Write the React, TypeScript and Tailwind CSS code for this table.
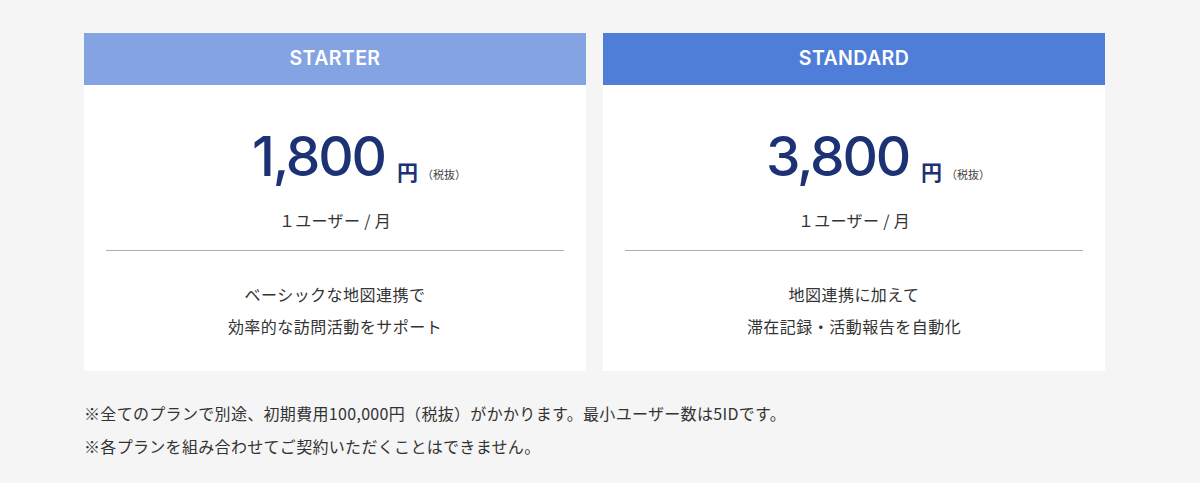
// Pricing plans
const plans = [
  {
    name: "STARTER",
    price: "1,800",
    header: "bg-[#84a3e3]",
    lines: ["ベーシックな地図連携で", "効率的な訪問活動をサポート"],
  },
  {
    name: "STANDARD",
    price: "3,800",
    header: "bg-[#4f7ed9]",
    lines: ["地図連携に加えて", "滞在記録・活動報告を自動化"],
  },
]

const jp = "font-['Noto_Sans_CJK_JP','Noto_Sans',sans-serif]"

export default function App() {
  return (
    <div className={`min-h-[483px] bg-[#f5f5f5] pt-[33px] pl-[84px] ${jp}`}>
      <div className="flex gap-[17px]">
        {plans.map((plan) => (
          <div key={plan.name} className="w-[502px] bg-white">
            <div className={`${plan.header} h-[52px] flex items-center justify-center`}>
              <span className="font-['Inter',sans-serif] text-[19.5px] font-semibold tracking-[0.02em] text-white">{plan.name}</span>
            </div>

            <div className="h-[286px] px-[22px] pt-[44px]">
              <div className="flex justify-center">
                <div className="relative flex items-end text-[#1c3274]">
                  <span className="font-['Inter',sans-serif] text-[55px] font-medium leading-none tracking-[-0.04em]">{plan.price}</span>
                  <span className="ml-[12px] mb-[2px] text-[21px] font-bold leading-none">円</span>
                  <span className="absolute left-full bottom-[4px] ml-[4px] whitespace-nowrap text-[11px] leading-none text-[#444]">（税抜）</span>
                </div>
              </div>

              <div className="mt-[24px] text-center text-[16px] leading-[24px] tracking-[0.02em] text-[#333]">１ユーザー / 月</div>

              <div className="mt-[18px] h-px bg-[#a9aeb6]" />

              <div className="mt-[27px] text-center text-[16px] leading-[32px] tracking-[0.03em] text-[#333]">
                {plan.lines.map((line) => (
                  <div key={line}>{line}</div>
                ))}
              </div>
            </div>
          </div>
        ))}
      </div>

      <div className="mt-[26px] text-[16px] leading-[33px] tracking-[0.02em] text-[#333]">
        <p>※全てのプランで別途、初期費用100,000円（税抜）がかかります。最小ユーザー数は5IDです。</p>
        <p>※各プランを組み合わせてご契約いただくことはできません。</p>
      </div>
    </div>
  )
}
